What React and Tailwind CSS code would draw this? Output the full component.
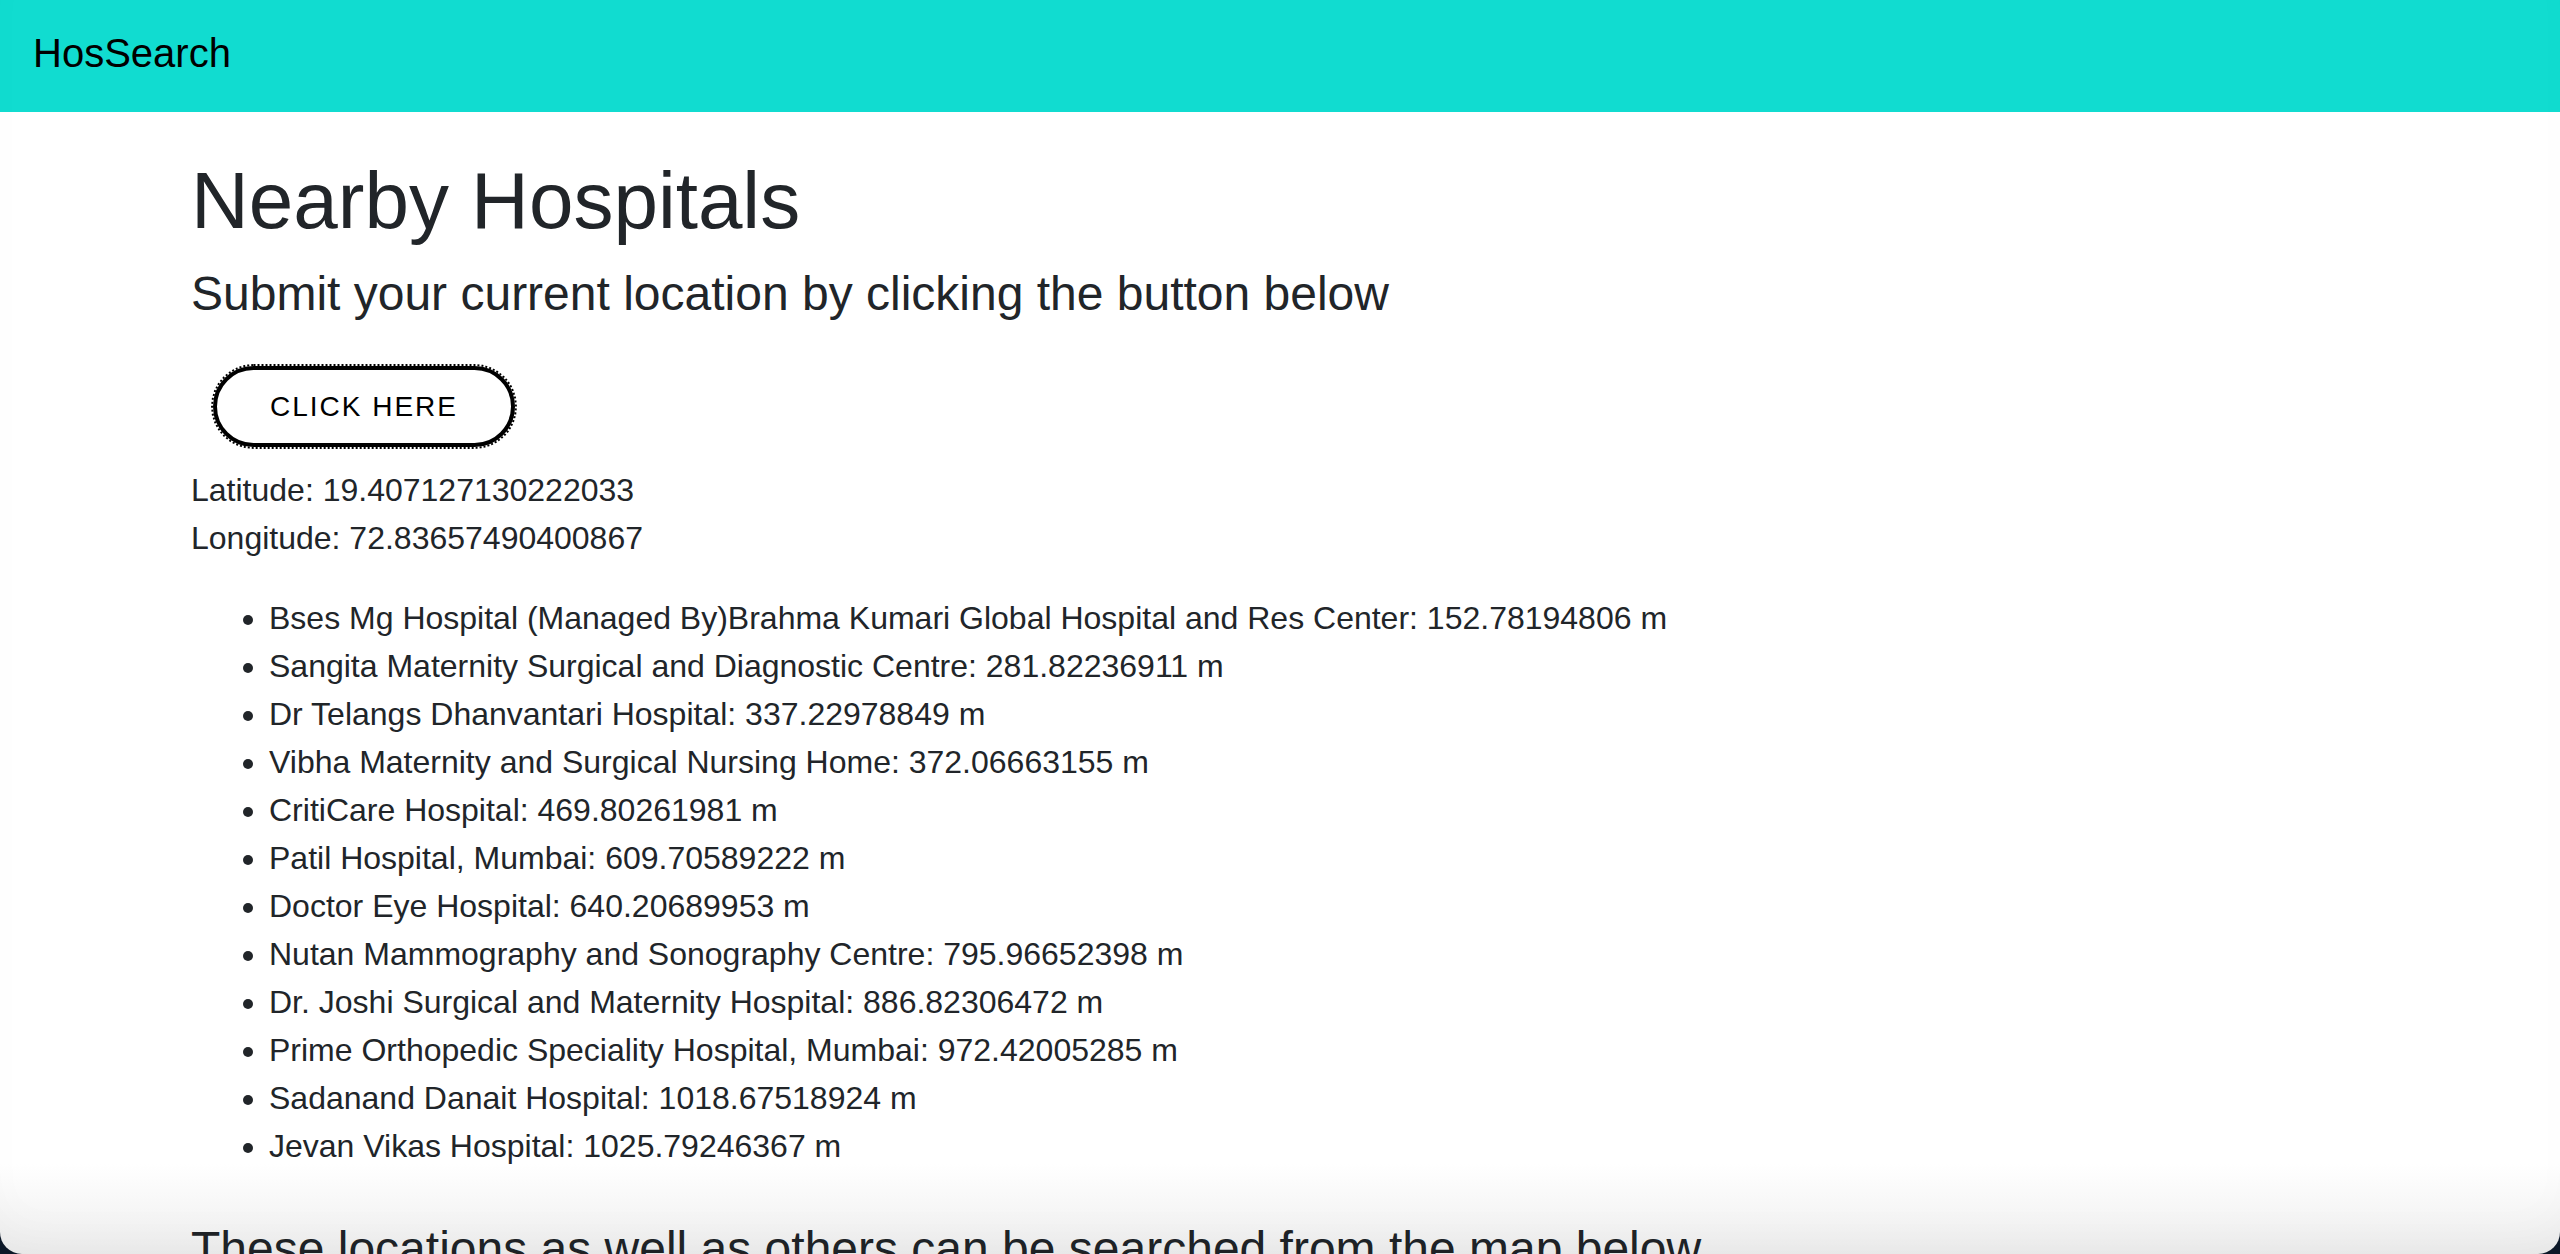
import React from 'react';

const hospitals = [
  ['Bses Mg Hospital (Managed By)Brahma Kumari Global Hospital and Res Center', '152.78194806'],
  ['Sangita Maternity Surgical and Diagnostic Centre', '281.82236911'],
  ['Dr Telangs Dhanvantari Hospital', '337.22978849'],
  ['Vibha Maternity and Surgical Nursing Home', '372.06663155'],
  ['CritiCare Hospital', '469.80261981'],
  ['Patil Hospital, Mumbai', '609.70589222'],
  ['Doctor Eye Hospital', '640.20689953'],
  ['Nutan Mammography and Sonography Centre', '795.96652398'],
  ['Dr. Joshi Surgical and Maternity Hospital', '886.82306472'],
  ['Prime Orthopedic Speciality Hospital, Mumbai', '972.42005285'],
  ['Sadanand Danait Hospital', '1018.67518924'],
  ['Jevan Vikas Hospital', '1025.79246367'],
];

const Navbar = () => (
  <nav className="h-[112px] bg-[#11dcd0] flex items-center px-[33px] pb-[6px]">
    <span className="text-[40px] leading-[60px] text-black">HosSearch</span>
  </nav>
);

const App = () => {
  return (
    <div className="min-h-screen bg-white text-[#212529] font-['Liberation_Sans',Arial,sans-serif]">
      <Navbar />
      <main className="pl-[191px] pr-[191px]">
        <h1 className="mt-[41px] mb-[16px] text-[80px] leading-[96px] font-normal">Nearby Hospitals</h1>
        <h4 className="mb-[16px] text-[48px] leading-[58px] font-normal">
          Submit your current location by clicking the button below
        </h4>
        <button className="mt-[27px] mb-[19px] ml-[22px] h-[81px] w-[302px] rounded-full border-[4px] border-black bg-white text-[28px] tracking-[2px] text-black outline-2 outline-dotted outline-black">
          CLICK HERE
        </button>
        <div className="text-[32px] leading-[48px] mb-[32px]">
          <div>Latitude: 19.407127130222033</div>
          <div>Longitude: 72.83657490400867</div>
        </div>
        <ul className="list-disc pl-[78px] text-[32px] leading-[48px] mb-[32px]">
          {hospitals.map(([name, dist]) => (
            <li key={name}>
              {name}: {dist} m
            </li>
          ))}
        </ul>
        <h4 className="mt-[50px] text-[48px] leading-[58px] font-normal">
          These locations as well as others can be searched from the map below
        </h4>
        <div className="mt-[32px] h-[800px] w-full bg-[#e5e3df]"></div>
      </main>
      {/* window bottom shading and rounded corners */}
      <div className="pointer-events-none fixed inset-x-0 bottom-0 h-[90px] bg-gradient-to-b from-white to-[#eeeeee] mix-blend-multiply"></div>
      <div className="pointer-events-none fixed inset-0 rounded-b-[22px] shadow-[0_0_0_60px_#0c1828,inset_0_-30px_60px_-30px_rgba(0,0,0,0.05)]"></div>
    </div>
  );
};

export default App;
